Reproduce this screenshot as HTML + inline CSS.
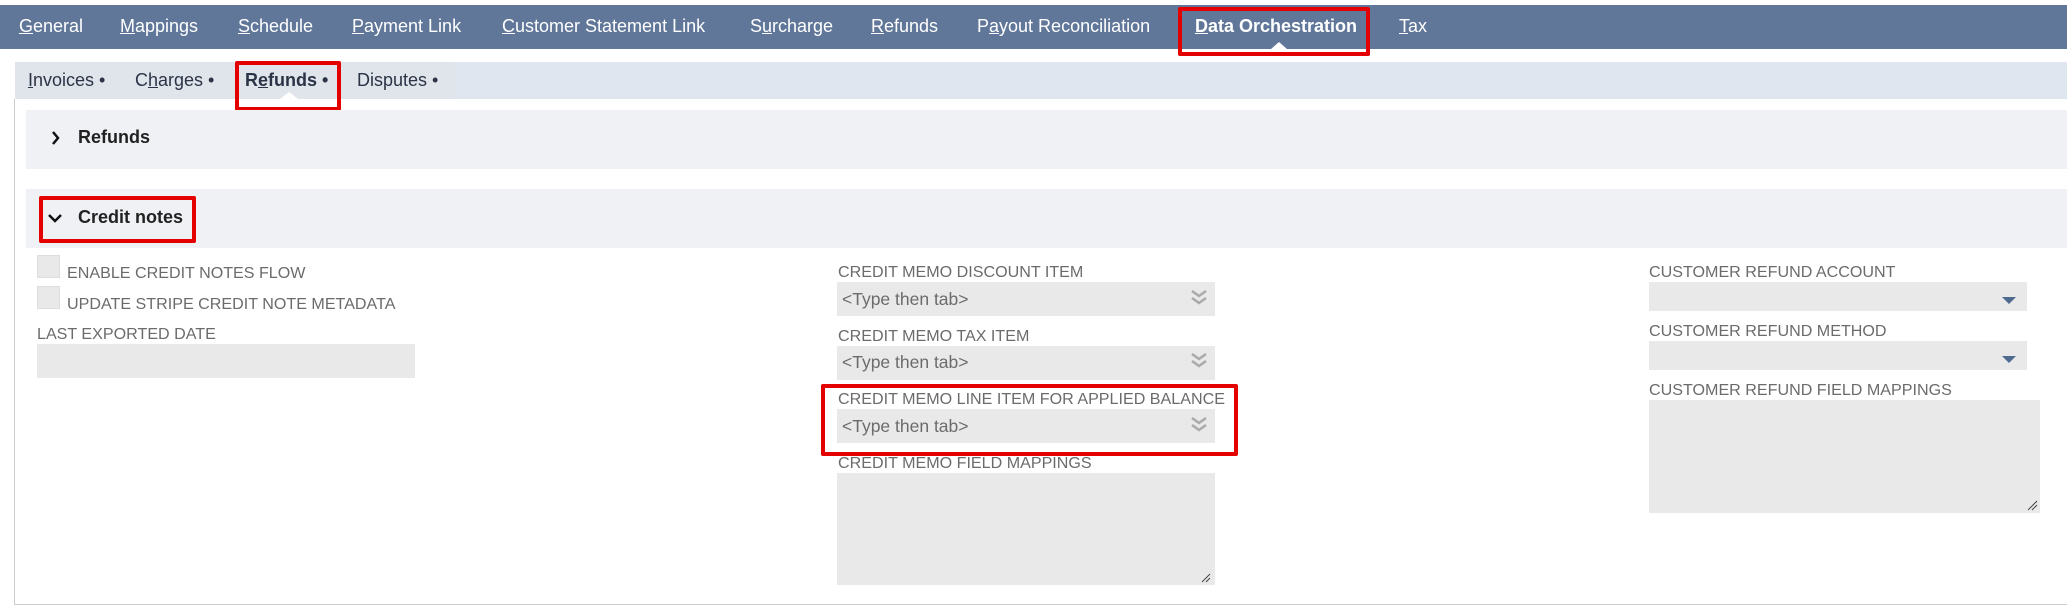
<!DOCTYPE html>
<html><head><meta charset="utf-8"><style>
*{margin:0;padding:0;box-sizing:border-box}
body{width:2067px;height:608px;background:#fff;position:relative;overflow:hidden;font-family:"Liberation Sans",Arial,sans-serif}
.a{position:absolute;white-space:nowrap}
.nav{left:0;top:5px;width:2067px;height:44px;background:#607799}
.nt{top:16px;font-size:18px;color:#fff}
.st{top:70px;font-size:18px;color:#2b3446}
.lbl{font-size:16.1px;color:#6b6b6b}
.in{background:#e9e9e9}
.ph{font-size:17.5px;color:#6b6b6b}
.red{border:4px solid #e50000;border-radius:2px}
</style></head><body>
<div class="a nav"></div>
<div class="a nt" style="left:19px"><u>G</u>eneral</div>
<div class="a nt" style="left:120px"><u>M</u>appings</div>
<div class="a nt" style="left:238px"><u>S</u>chedule</div>
<div class="a nt" style="left:352px"><u>P</u>ayment Link</div>
<div class="a nt" style="left:502px"><u>C</u>ustomer Statement Link</div>
<div class="a nt" style="left:750px">S<u>u</u>rcharge</div>
<div class="a nt" style="left:871px"><u>R</u>efunds</div>
<div class="a nt" style="left:977px">P<u>a</u>yout Reconciliation</div>
<div class="a nt" style="left:1195px;font-weight:bold"><u>D</u>ata Orchestration</div>
<div class="a nt" style="left:1399px"><u>T</u>ax</div>
<div class="a" style="left:1271px;top:42px;width:0;height:0;border-left:8px solid transparent;border-right:8px solid transparent;border-bottom:7px solid #fff"></div>
<div class="a red" style="left:1178px;top:7px;width:192px;height:49px"></div>

<div class="a" style="left:15px;top:62px;width:2052px;height:37px;background:#dfe6ef"></div>
<div class="a" style="left:15px;top:62px;width:440px;height:37px;background:#e0e4eb"></div>
<div class="a st" style="left:28px"><u>I</u>nvoices •</div>
<div class="a st" style="left:135px">C<u>h</u>arges •</div>
<div class="a st" style="left:245px;font-weight:bold">R<u>e</u>funds •</div>
<div class="a st" style="left:357px">Disputes •</div>
<div class="a" style="left:280px;top:92px;width:0;height:0;border-left:9px solid transparent;border-right:9px solid transparent;border-bottom:7px solid #fff"></div>
<div class="a red" style="left:235px;top:61px;width:106px;height:50px"></div>

<div class="a" style="left:14px;top:99px;width:1px;height:506px;background:#ccc"></div>
<div class="a" style="left:14px;top:604px;width:2053px;height:1px;background:#ccc"></div>

<div class="a" style="left:26px;top:110px;width:2041px;height:59px;background:#eff1f5"></div>
<svg class="a" style="left:51px;top:130px" width="10" height="16"><path d="M2 2 L7 8 L2 14" stroke="#111" stroke-width="2.5" fill="none"/></svg>
<div class="a" style="left:78px;top:127px;font-size:18px;font-weight:bold;color:#222">Refunds</div>

<div class="a" style="left:26px;top:189px;width:2041px;height:59px;background:#eff1f5"></div>
<svg class="a" style="left:47px;top:213px" width="16" height="10"><path d="M2 2 L8 8 L14 2" stroke="#111" stroke-width="2.5" fill="none"/></svg>
<div class="a" style="left:78px;top:207px;font-size:18px;font-weight:bold;color:#222">Credit notes</div>
<div class="a red" style="left:39px;top:196px;width:157px;height:47px"></div>

<div class="a in" style="left:37px;top:255px;width:23px;height:23px;border:1px solid #ddd"></div>
<div class="a lbl" style="left:67px;top:264px">ENABLE CREDIT NOTES FLOW</div>
<div class="a in" style="left:37px;top:286px;width:23px;height:23px;border:1px solid #ddd"></div>
<div class="a lbl" style="left:67px;top:295px">UPDATE STRIPE CREDIT NOTE METADATA</div>
<div class="a lbl" style="left:37px;top:325px">LAST EXPORTED DATE</div>
<div class="a in" style="left:37px;top:344px;width:378px;height:34px"></div>

<div class="a lbl" style="left:838px;top:263px">CREDIT MEMO DISCOUNT ITEM</div>
<div class="a in" style="left:837px;top:282px;width:378px;height:34px"></div>
<div class="a ph" style="left:842px;top:289px">&lt;Type then tab&gt;</div>
<div class="a lbl" style="left:838px;top:327px">CREDIT MEMO TAX ITEM</div>
<div class="a in" style="left:837px;top:346px;width:378px;height:34px"></div>
<div class="a ph" style="left:842px;top:352px">&lt;Type then tab&gt;</div>
<div class="a lbl" style="left:838px;top:390px">CREDIT MEMO LINE ITEM FOR APPLIED BALANCE</div>
<div class="a in" style="left:837px;top:409px;width:378px;height:34px"></div>
<div class="a ph" style="left:842px;top:416px">&lt;Type then tab&gt;</div>
<div class="a red" style="left:821px;top:384px;width:417px;height:72px"></div>
<div class="a lbl" style="left:838px;top:454px">CREDIT MEMO FIELD MAPPINGS</div>
<div class="a in" style="left:837px;top:473px;width:378px;height:112px"></div>

<div class="a lbl" style="left:1649px;top:263px">CUSTOMER REFUND ACCOUNT</div>
<div class="a in" style="left:1649px;top:282px;width:378px;height:29px"></div>
<div class="a lbl" style="left:1649px;top:322px">CUSTOMER REFUND METHOD</div>
<div class="a in" style="left:1649px;top:341px;width:378px;height:29px"></div>
<div class="a lbl" style="left:1649px;top:381px">CUSTOMER REFUND FIELD MAPPINGS</div>
<div class="a in" style="left:1649px;top:400px;width:391px;height:113px"></div>
<svg class="a" style="left:0;top:0" width="2067" height="608">
<g stroke="#aaa" stroke-width="2.5" fill="none">
<path d="M1192 291 L1199 296 L1206 291 M1192 298 L1199 303 L1206 298"/>
<path d="M1192 354 L1199 359 L1206 354 M1192 361 L1199 366 L1206 361"/>
<path d="M1192 418 L1199 423 L1206 418 M1192 425 L1199 430 L1206 425"/>
</g>
<g stroke="#444" stroke-width="1"><path d="M1202 582 L1210 574 M1206 582 L1210 578"/><path d="M2028 510 L2037 501 M2032 510 L2037 505"/></g>
<path d="M2002 297 L2016 297 L2009 304Z" fill="#4f6a8f"/>
<path d="M2002 356 L2016 356 L2009 363Z" fill="#4f6a8f"/>
</svg>
</body></html>
